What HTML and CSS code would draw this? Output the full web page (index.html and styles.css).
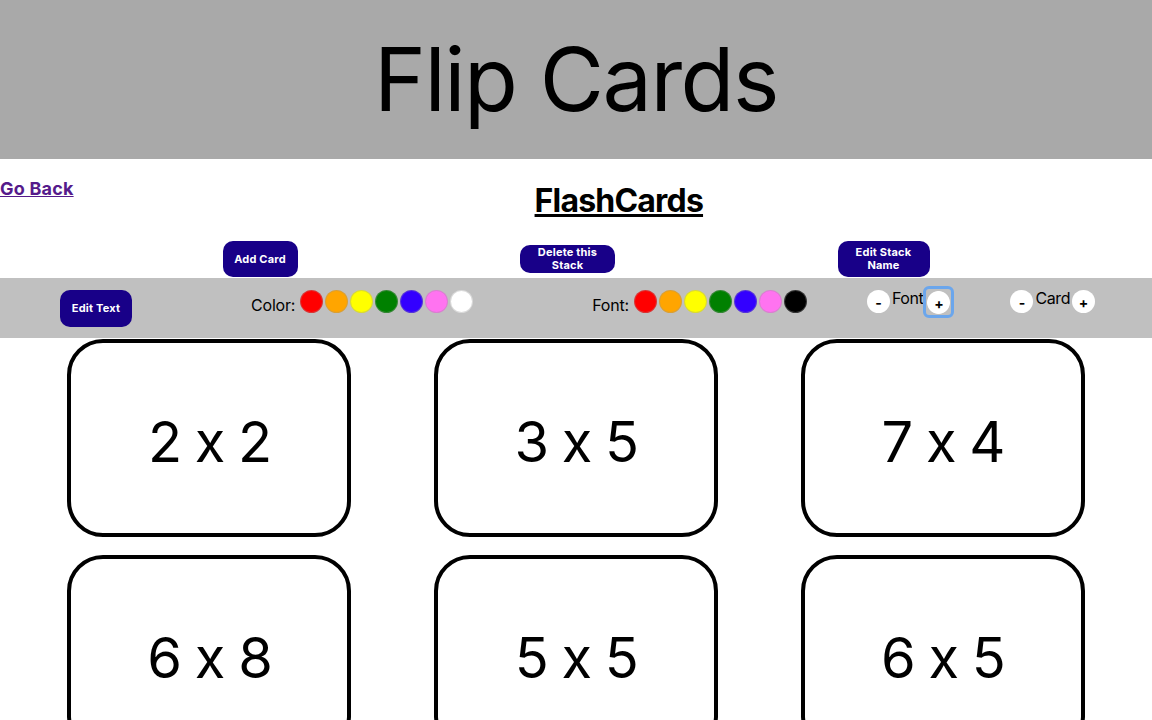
FILE: index.html
```html
<!DOCTYPE html>
<html lang="en">
<head>
<meta charset="utf-8">
<title>Flip Cards</title>
<link rel="stylesheet" href="styles.css">
</head>
<body>
<header class="site-header">
  <div class="site-title">Flip Cards</div>
</header>
<div class="topbar">
  <a class="go-back" href="#">Go Back</a>
  <h1 class="stack-title">FlashCards</h1>
</div>
<div class="actions">
  <button class="btn btn-add">Add Card</button>
  <button class="btn btn-delete">Delete this Stack</button>
  <button class="btn btn-rename">Edit Stack Name</button>
</div>
<div class="toolbar">
  <button class="btn btn-edit-text">Edit Text</button>
  <div class="palette palette-color">
    <span class="palette-label">Color:</span>
    <button class="swatch red"></button>
    <button class="swatch orange"></button>
    <button class="swatch yellow"></button>
    <button class="swatch green"></button>
    <button class="swatch blue"></button>
    <button class="swatch pink"></button>
    <button class="swatch white"></button>
  </div>
  <div class="palette palette-font">
    <span class="palette-label">Font:</span>
    <button class="swatch red"></button>
    <button class="swatch orange"></button>
    <button class="swatch yellow"></button>
    <button class="swatch green"></button>
    <button class="swatch blue"></button>
    <button class="swatch pink"></button>
    <button class="swatch black"></button>
  </div>
  <div class="stepper">
    <button class="step">-</button>
    <span class="step-label">Font</span>
    <button class="step focused">+</button>
  </div>
  <div class="stepper">
    <button class="step">-</button>
    <span class="step-label">Card</span>
    <button class="step">+</button>
  </div>
</div>
<main class="cards">
  <div class="card">2 x 2</div>
  <div class="card">3 x 5</div>
  <div class="card">7 x 4</div>
  <div class="card">6 x 8</div>
  <div class="card">5 x 5</div>
  <div class="card">6 x 5</div>
</main>
</body>
</html>
```
FILE: styles.css
```css
* { box-sizing: border-box; }
html, body { margin: 0; padding: 0; }
body {
  font-family: Inter, "Noto Sans", sans-serif;
  font-feature-settings: "calt" 0;
  color: #000;
  background: #fff;
  overflow: hidden;
}
.site-header {
  height: 159px;
  background: #a9a9a9;
  display: flex;
  align-items: center;
  justify-content: center;
}
.site-title {
  font-size: 88px;
  font-weight: 400;
  line-height: 1;
  letter-spacing: -1.5px;
  padding-bottom: 2px;
}
.topbar {
  display: flex;
  align-items: flex-start;
}
.go-back {
  margin-top: 19px;
  font-size: 18px;
  font-weight: 700;
  color: #551a8b;
  text-decoration: underline;
  line-height: 22px;
  letter-spacing: 0.2px;
}
.stack-title {
  flex: 1;
  margin: 22px 0 0 0;
  padding-left: 12px;
  text-align: center;
  font-size: 32px;
  font-weight: 700;
  letter-spacing: -0.8px;
  text-decoration: underline;
  line-height: 39px;
}
.actions {
  margin-top: 20px;
  height: 38px;
  display: flex;
  align-items: center;
  justify-content: space-evenly;
}
.btn {
  background: #180088;
  color: #fff;
  border: none;
  border-radius: 10px;
  font-family: Inter, "Noto Sans", sans-serif;
  font-feature-settings: "calt" 0;
  font-weight: 700;
  font-size: 11px;
  line-height: 13px;
  padding: 0 6px;
  letter-spacing: 0.2px;
}
.btn-add { width: 75px; height: 36px; }
.btn-delete { width: 95px; height: 28px; }
.btn-rename { width: 92px; height: 36px; }
.toolbar {
  height: 60px;
  background: #c0c0c0;
  display: flex;
  align-items: flex-start;
  padding: 12px 0 0 60px;
  gap: 60px;
}
.btn-edit-text { width: 72px; height: 37px; }
.palette {
  display: flex;
  align-items: flex-start;
  gap: 2px;
  margin-left: 59px;
}
.palette-label {
  font-size: 16px;
  line-height: 19px;
  padding-top: 6px;
  margin-right: 3px;
  letter-spacing: -0.2px;
}
.swatch {
  width: 23px;
  height: 23px;
  border-radius: 50%;
  border: 1px solid rgba(150, 150, 150, 0.35);
  padding: 0;
}
.red { background: #ff0000; }
.orange { background: #ffa500; }
.yellow { background: #ffff00; }
.green { background: #008000; }
.blue { background: #3300ff; }
.pink { background: #ff73f0; }
.white { background: #ffffff; }
.black { background: #000000; }
.stepper {
  display: flex;
  align-items: flex-start;
  gap: 2px;
}
.step {
  width: 23px;
  height: 23px;
  border-radius: 50%;
  border: none;
  background: #fff;
  color: #000;
  font-family: Inter, "Noto Sans", sans-serif;
  font-weight: 700;
  font-size: 14px;
  line-height: 23px;
  padding: 0;
  padding-top: 1px;
}
.step.focused {
  margin-top: 0;
  margin-left: 2px;
  width: 23px;
  height: 24px;
  padding-top: 2px;
  border-radius: 2px;
  background: radial-gradient(circle at 50% 52%, #fff 11px, transparent 11.8px);
  outline: 3px solid #6ba6ec;
  outline-offset: 1px;
}
.step-label {
  font-size: 16px;
  line-height: 19px;
  margin-top: -1px;
  letter-spacing: -0.4px;
}
.cards {
  display: grid;
  grid-template-columns: repeat(3, 1fr);
  justify-items: center;
  row-gap: 18px;
  padding: 1px 26px 0 26px;
}
.card {
  width: 284px;
  height: 198px;
  border: 4px solid #000;
  border-radius: 36px;
  display: flex;
  align-items: center;
  justify-content: center;
  font-size: 56px;
  letter-spacing: -1.5px;
  padding-top: 8px;
}
```
